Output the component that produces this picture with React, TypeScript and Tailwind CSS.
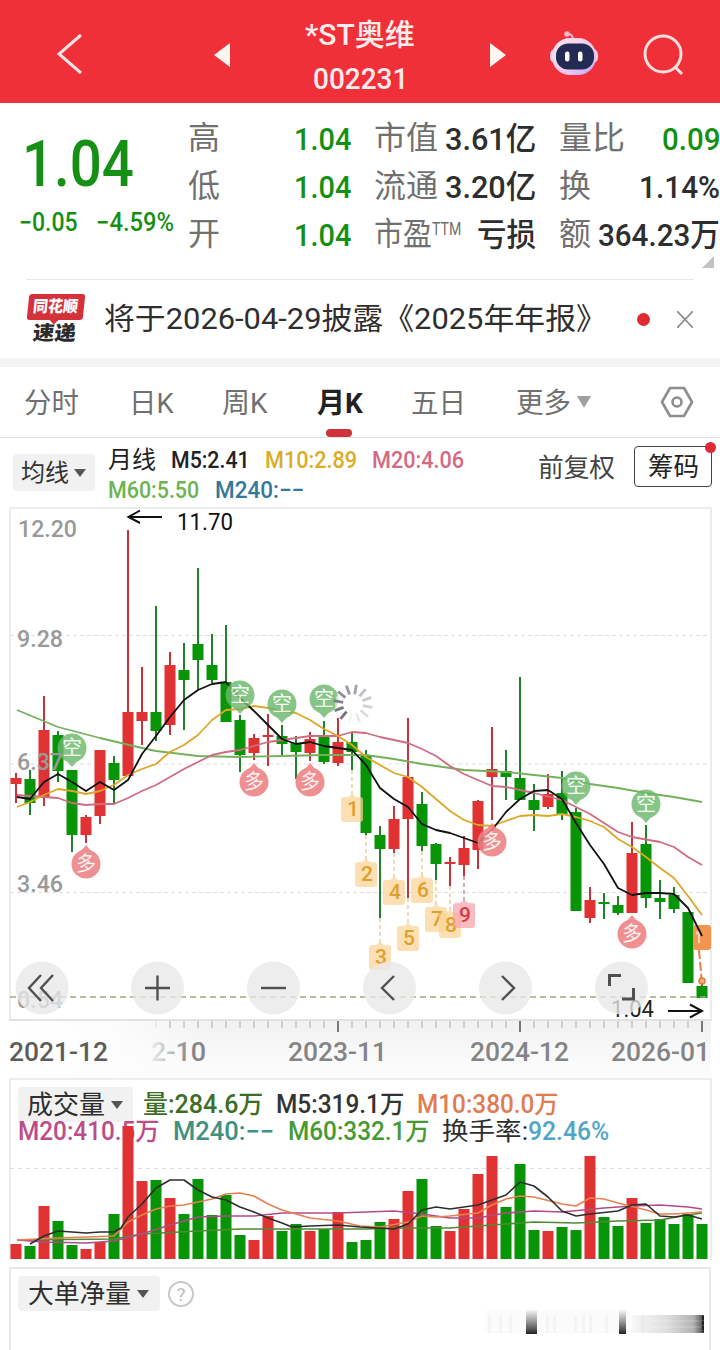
import { useLayoutEffect, useRef } from 'react';
import type { ReactNode } from 'react';

/* Condenses or widens a run of text so it fills exactly `w` pixels. */
function Fit({ w, className = '', children }: { w: number; className?: string; children: ReactNode }) {
  const ref = useRef<HTMLSpanElement>(null);
  useLayoutEffect(() => {
    const el = ref.current;
    if (el) el.style.transform = `scaleX(${w / el.offsetWidth})`;
  }, [w, children]);
  return (
    <span className={`block shrink-0 whitespace-nowrap ${className}`} style={{ width: w }}>
      <span ref={ref} className="inline-block origin-left whitespace-nowrap">{children}</span>
    </span>
  );
}

const RED = '#e03232';
const GREEN = '#079407';

// [bodyTop, bodyBottom, high, low, rising]
const candles: [number, number, number, number, number][] = [
  [778, 784, 773, 803, 1], [779, 803, 770, 815, 0], [730, 798, 696, 806, 1], [735, 771, 731, 782, 0],
  [770, 835, 770, 852, 0], [817, 835, 815, 843, 1], [750, 816, 750, 824, 1], [763, 780, 756, 804, 0],
  [712, 776, 530, 776, 1], [712, 721, 667, 745, 1], [712, 731, 606, 741, 0], [665, 725, 652, 735, 1],
  [670, 680, 643, 730, 0], [644, 660, 568, 690, 0], [665, 680, 634, 683, 0], [682, 722, 625, 722, 0],
  [720, 755, 715, 772, 0], [738, 753, 734, 760, 1], [735, 737, 714, 766, 1], [736, 744, 725, 755, 0],
  [743, 752, 736, 779, 0], [739, 753, 732, 761, 1], [736, 762, 721, 764, 0], [742, 763, 718, 766, 1],
  [742, 752, 733, 770, 0], [755, 833, 750, 835, 0], [835, 849, 826, 918, 0], [819, 849, 806, 853, 1],
  [777, 819, 718, 898, 1], [804, 846, 792, 851, 0], [844, 864, 843, 880, 0], [862, 864, 857, 886, 1],
  [848, 865, 836, 876, 1], [801, 850, 800, 869, 1], [769, 777, 727, 820, 1], [771, 777, 750, 800, 0],
  [778, 800, 677, 800, 0], [800, 810, 784, 831, 0], [794, 807, 774, 809, 1], [793, 815, 771, 820, 0],
  [812, 911, 808, 911, 0], [900, 918, 887, 923, 1], [902, 904, 893, 919, 0], [905, 913, 896, 915, 0],
  [853, 913, 822, 913, 1], [844, 898, 825, 908, 0], [898, 902, 880, 919, 0], [895, 909, 887, 913, 0],
  [912, 983, 912, 983, 0], [986, 998, 984, 998, 0],
];

// [top, rising]
const volumes: [number, number][] = [
  [1244, 1], [1246, 0], [1206, 1], [1221, 0], [1245, 0], [1249, 1], [1242, 1], [1214, 0], [1126, 1], [1181, 1],
  [1180, 0], [1198, 1], [1214, 0], [1179, 0], [1215, 0], [1195, 0], [1235, 0], [1240, 1], [1216, 1], [1231, 0],
  [1224, 0], [1231, 1], [1229, 0], [1212, 1], [1242, 0], [1240, 0], [1222, 0], [1219, 1], [1191, 1], [1179, 0],
  [1226, 0], [1231, 1], [1209, 1], [1174, 1], [1156, 1], [1207, 0], [1164, 0], [1230, 0], [1231, 1], [1227, 0],
  [1230, 0], [1156, 1], [1217, 0], [1226, 0], [1198, 1], [1223, 0], [1219, 0], [1224, 0], [1214, 0], [1224, 0],
];

const cx = (i: number) => 16 + 14 * i;

const averages: [string, string][] = [
  ['#74b05a', '17,710 58,727 100,738 142,748 156,751 198,756 240,757 282,756 324,755 366,755 394,759 422,764 464,770 506,772 534,775 562,778 590,784 618,788 646,793 674,797 702,802'],
  ['#cf6c80', '17,795 30,796 58,798 72,803 86,805 100,804 114,804 128,798 142,791 156,785 184,769 212,755 226,752 240,750 254,746 268,742 282,740 310,736 338,736 352,732 366,733 380,737 408,743 422,749 436,756 450,766 464,774 478,780 492,786 506,787 534,793 562,800 576,807 590,814 618,832 632,837 660,842 674,847 688,857 702,865'],
  ['#dca726', '17,807 30,802 44,795 58,789 72,791 86,794 100,791 114,785 128,775 142,769 156,764 170,752 184,745 198,735 212,720 226,710 240,709 254,706 268,708 282,711 296,713 310,720 324,729 338,736 352,745 366,757 380,765 394,773 408,777 422,787 436,799 450,811 464,820 478,825 492,826 506,821 520,816 534,815 548,816 562,814 576,817 590,821 604,827 618,839 632,847 646,857 660,868 674,878 688,896 702,915'],
  ['#111111', '17,797 30,799 44,782 58,774 72,782 86,791 100,782 114,790 128,780 142,754 156,736 170,717 184,700 198,690 212,684 226,682 240,698 254,711 268,725 282,739 296,744 310,742 324,746 338,748 352,750 366,765 380,788 394,799 408,807 422,824 436,830 450,833 464,838 478,843 492,830 506,812 520,799 534,791 548,790 562,799 576,823 590,845 604,864 618,888 632,895 646,893 660,893 674,894 688,908 702,936'],
];

const volumeAverages: [string, string][] = [
  ['#4f8a34', '17,1240 114,1239 142,1234 198,1231 240,1229 310,1229 366,1229 394,1228 450,1228 492,1225 534,1222 576,1223 618,1221 660,1220 688,1215 702,1213'],
  ['#b24a86', '17,1240 44,1242 86,1243 114,1241 142,1234 170,1225 198,1217 226,1216 254,1216 282,1213 338,1213 394,1211 422,1214 450,1218 478,1218 506,1213 534,1211 562,1212 604,1208 632,1206 660,1205 688,1207 702,1209'],
  ['#e5814f', '17,1240 58,1238 114,1236 128,1222 142,1215 156,1209 170,1206 184,1205 212,1199 226,1194 240,1193 254,1196 268,1204 282,1210 310,1218 338,1221 360,1226 380,1227 408,1222 422,1216 436,1217 450,1216 478,1213 492,1205 506,1199 520,1196 534,1197 562,1204 576,1206 590,1198 604,1199 618,1203 646,1210 660,1214 674,1214 702,1212'],
  ['#2e2e2e', '30,1244 44,1236 58,1231 72,1232 86,1233 100,1232 114,1232 121,1228 128,1217 142,1204 156,1188 170,1180 184,1180 198,1190 212,1197 226,1200 240,1207 254,1212 268,1218 282,1223 292,1227 310,1226 338,1225 360,1227 394,1229 408,1224 422,1210 436,1207 450,1209 478,1205 506,1195 520,1182 534,1186 548,1197 562,1211 576,1216 590,1214 618,1211 632,1205 646,1204 660,1216 674,1217 688,1215 702,1219'],
];

const shortMarks: [number, number][] = [[72, 748], [240, 695], [282, 704], [324, 699], [576, 786], [646, 804]];
const longMarks: [number, number][] = [[86, 864], [254, 782], [310, 782], [492, 842], [632, 934]];
// [x, center y, dashed line start]
const counts: [number, number, number][] = [
  [352, 808, 770], [366, 873, 835], [380, 956, 918], [394, 891, 853], [408, 937, 898],
  [422, 889, 851], [436, 918, 880], [450, 924, 886], [464, 914, 876],
];

function Label({ x, y, w, size = 24, fill = '#999', weight = 400, children }: { x: number; y: number; w: number; size?: number; fill?: string; weight?: number; children: string }) {
  return (
    <text x={x} y={y} fontSize={size} fill={fill} fontWeight={weight} textLength={w} lengthAdjust="spacingAndGlyphs">
      {children}
    </text>
  );
}

function PriceChart() {
  return (
    <svg className="block" width="720" height="571" viewBox="0 507 720 571">
      <defs>
        <linearGradient id="axis" x1="0" x2="0" y1="0" y2="1">
          <stop offset="0" stopColor="#f1f1f1" />
          <stop offset="0.7" stopColor="#fafafa" />
          <stop offset="1" stopColor="#fdfdfd" />
        </linearGradient>
        <linearGradient id="axisFade" x1="0" x2="1" y1="0" y2="0">
          <stop offset="0" stopColor="#fff" />
          <stop offset="0.5" stopColor="#fdfdfd" stopOpacity="0.95" />
          <stop offset="1" stopColor="#fbfbfb" stopOpacity="0" />
        </linearGradient>
        <linearGradient id="dateFade" gradientUnits="userSpaceOnUse" x1="150" x2="190" y1="0" y2="0">
          <stop offset="0" stopColor="#eee" />
          <stop offset="0.35" stopColor="#ccc" />
          <stop offset="1" stopColor="#858585" />
        </linearGradient>
      </defs>
      <rect x="10" y="1020" width="701" height="58" fill="url(#axis)" />
      <rect x="10" y="1020" width="200" height="58" fill="url(#axisFade)" />
      <path d="M10 1020V508H711V1020" fill="none" stroke="#e8e8e8" strokeWidth="1.6" />
      <path d="M9 1020H712" stroke="#e2e2e2" strokeWidth="2" />
      {[635.5, 764, 892.5].map((y) => (
        <path key={y} d={`M10 ${y}H710`} stroke="#e5dcdf" strokeDasharray="4 3" />
      ))}
      {candles.map(([top, bottom, high, low, up], i) => (
        <g key={i}>
          <rect x={cx(i) - 1} y={high} width="2" height={low - high} fill={up ? '#c8323a' : '#21802a'} />
          <rect x={cx(i) - 5.5} y={top} width="11" height={bottom - top} fill={up ? RED : GREEN} />
        </g>
      ))}
      {counts.map(([x, y, from], i) => (
        <g key={x}>
          <path d={`M${x} ${from}V${y - 13}`} stroke={i === 8 ? '#b0777c' : '#dfc18a'} strokeWidth="1.2" strokeDasharray="4 3" />
          <path
            d={`M${x - 8} ${y - 11}H${x - 4}L${x} ${y - 14}L${x + 4} ${y - 11}H${x + 8}Q${x + 11} ${y - 11} ${x + 11} ${y - 8}V${y + 11}Q${x + 11} ${y + 14} ${x + 8} ${y + 14}H${x - 8}Q${x - 11} ${y + 14} ${x - 11} ${y + 11}V${y - 8}Q${x - 11} ${y - 11} ${x - 8} ${y - 11}Z`}
            fill={i === 8 ? '#f7a0a8' : '#fbd394'}
            fillOpacity="0.7"
          />
          <text x={x + 1} y={y + 8} fontSize="21" fontWeight="500" textAnchor="middle" fill={i === 8 ? '#d13c44' : '#dfa02b'}>{i + 1}</text>
        </g>
      ))}
      <g>
        <rect x="693" y="925" width="18" height="25" rx="3" fill="#f19550" />
        <path d="M699 930V943M699 931L696 934" stroke="#fbd9b5" strokeWidth="2" fill="none" />
        <path d="M699 950L701.5 978" stroke="#d9834a" strokeWidth="2" strokeDasharray="9 3" />
        <circle cx="702" cy="981" r="3" fill="#f7b27a" stroke="#e2793b" strokeWidth="1.5" />
      </g>
      {averages.map(([color, points]) => (
        <polyline key={color} points={points} fill="none" stroke={color} strokeWidth="1.8" strokeLinejoin="round" />
      ))}
      {shortMarks.map(([x, y]) => (
        <g key={x} opacity="0.82">
          <path d={`M${x - 6} ${y + 12}L${x} ${y + 19}L${x + 6} ${y + 12}Z`} fill="#6cb86e" />
          <circle cx={x} cy={y} r="14.5" fill="#6cb86e" />
          <text x={x} y={y + 7} fontSize="20" textAnchor="middle" fill="#f1fff1">空</text>
        </g>
      ))}
      {longMarks.map(([x, y]) => (
        <g key={x} opacity="0.88">
          <path d={`M${x - 6} ${y - 12}L${x} ${y - 19}L${x + 6} ${y - 12}Z`} fill="#ec8084" />
          <circle cx={x} cy={y} r="14.5" fill="#ec8084" />
          <text x={x} y={y + 7} fontSize="20" textAnchor="middle" fill="#fff0f0">多</text>
        </g>
      ))}
      <circle cx="353" cy="704" r="18" fill="#fff" fillOpacity="0.6" />
      {Array.from({ length: 12 }, (_, k) => (
        <path
          key={k}
          d="M353 694V684.500"
          stroke="#77707c"
          strokeWidth="2.8"
          strokeOpacity={[0.65, 0.45, 0.38, 0.32, 0.25, 0.15, 0.08, 1, 0.95, 0.88, 0.8, 0.72][k]}
          transform={`rotate(${k * 30 + 10} 353 704)`}
        />
      ))}
      <path d="M10 997H710" stroke="#a5a580" strokeWidth="1.5" strokeDasharray="6 4" />
      <g fontWeight="500">
        <Label x={18} y={537} w={59} weight={500}>12.20</Label>
        <Label x={17} y={647} w={46} weight={500}>9.28</Label>
        <Label x={17} y={770} w={46} weight={500}>6.37</Label>
        <Label x={17} y={892} w={46} weight={500}>3.46</Label>
        <Label x={17} y={1008} w={46} weight={500}>0.54</Label>
      </g>
      <path d="M162 517H129M140 510.500L128.500 517L140 523" fill="none" stroke="#111" strokeWidth="2" />
      <Label x={177} y={530} w={56} size={23} fill="#111">11.70</Label>
      <Label x={611} y={1017} w={43} size={23} fill="#222">1.04</Label>
      {[42, 157.5, 273.5, 389.5, 505.5, 621.5].map((x) => (
        <circle key={x} cx={x} cy="988" r="26.500" fill="#e8e8e8" fillOpacity="0.78" />
      ))}
      <g fill="none" stroke="#505050" strokeWidth="2.4">
        <path d="M41 975L29 988L41 1001M53 975L41 988L53 1001" />
        <path d="M145 988H170M157.500 975.500V1000.500" />
        <path d="M261 988H286" />
        <path d="M394 976L382 988L394 1000" />
        <path d="M502 976L514 988L502 1000" />
        <path d="M609.500 986V975.500H621M633.500 988V999H622" strokeWidth="3" />
      </g>
      <path d="M668 1011H701M690 1004.500L702 1011L690 1017.500" fill="none" stroke="#111" strokeWidth="2" />
      {Array.from({ length: 40 }, (_, k) => k + 10).map((i) => {
        const major = i === 23 || i === 36 || i === 49;
        return <path key={i} d={`M${cx(i)} 1021V${major ? 1032 : 1028}`} stroke={i === 10 ? '#ddd' : major ? '#777' : '#aaa'} strokeWidth={major ? 2 : 1} />;
      })}
      <Label x={9} y={1061} w={99} size={26} weight={500} fill="#5c5c5c">2021-12</Label>
      <Label x={151} y={1061} w={55} size={26} weight={500} fill="url(#dateFade)">2-10</Label>
      <Label x={288} y={1061} w={99} size={26} weight={500} fill="#848484">2023-11</Label>
      <Label x={470} y={1061} w={99} size={26} weight={500} fill="#848484">2024-12</Label>
      <Label x={611} y={1061} w={99} size={26} weight={500} fill="#848484">2026-01</Label>
    </svg>
  );
}

function VolumeChart() {
  return (
    <svg className="absolute inset-0" width="720" height="189" viewBox="0 1078 720 189">
      <path d="M10 1260V1079H711V1260" fill="none" stroke="#e8e8e8" strokeWidth="1.6" />
      <path d="M10 1168.500H710" stroke="#dcdcdc" strokeDasharray="4 4" />
      {volumes.map(([top, up], i) => (
        <rect key={i} x={cx(i) - 5.5} y={top} width="11" height={1259 - top} fill={up ? RED : GREEN} />
      ))}
      {volumeAverages.map(([color, points]) => (
        <polyline key={color} points={points} fill="none" stroke={color} strokeWidth="1.6" strokeLinejoin="round" />
      ))}
    </svg>
  );
}

function Caret({ className = 'border-t-[#555]' }: { className?: string }) {
  return <span className={`block h-0 w-0 border-x-[6px] border-t-[8px] border-x-transparent ${className}`} />;
}

function Header() {
  return (
    <header className="flex h-[103px] bg-[#f03038] text-[#ffecec]">
      <div className="flex w-[190px] items-center pl-[57px] pt-1">
        <svg width="26" height="42" viewBox="0 0 26 42" fill="none" stroke="#ffe3e3" strokeWidth="3"><path d="M24 2L2 21L24 40" /></svg>
      </div>
      <div className="flex w-[340px] items-center justify-between px-[24px]">
        <svg className="mt-[7px]" width="17" height="24" viewBox="0 0 17 24"><path d="M16 0V24L0 12Z" fill="#fff6f2" /></svg>
        <div className="flex flex-col items-center pt-[11px]">
          <Fit w={110} className="h-[44px] text-[30px] font-medium leading-[42px]">*ST奥维</Fit>
          <Fit w={95} className="h-[42px] text-[30px] font-medium leading-[42px]">002231</Fit>
        </div>
        <svg className="mt-[7px]" width="17" height="24" viewBox="0 0 17 24"><path d="M1 0V24L17 12Z" fill="#fff6f2" /></svg>
      </div>
      <svg className="ml-[18px] mt-[28px]" width="52" height="50" viewBox="548 28 52 50">
        <defs>
          <linearGradient id="shell" x1="0" x2="1" y1="0" y2="1">
            <stop offset="0" stopColor="#ffe6ef" />
            <stop offset="0.6" stopColor="#f3c9ee" />
            <stop offset="1" stopColor="#b7a5f5" />
          </linearGradient>
        </defs>
        <circle cx="567" cy="34" r="2.800" fill="#f9b8c6" />
        <path d="M568 34Q573 34 573 40" fill="none" stroke="#f9b8c6" strokeWidth="2" />
        <rect x="550" y="48" width="48" height="16" rx="7" fill="#f9d6ee" />
        <rect x="552" y="38" width="44" height="37" rx="18" fill="url(#shell)" />
        <rect x="556" y="43.500" width="38" height="26" rx="12" fill="#232b55" />
        <rect x="565" y="51.500" width="4.500" height="10" rx="2.200" fill="#fff" />
        <rect x="578" y="51.500" width="4.500" height="10" rx="2.200" fill="#fff" />
      </svg>
      <svg className="ml-[42px] mt-[34px]" width="44" height="42" viewBox="642 34 44 42" fill="none" stroke="#ffe0dd" strokeWidth="3">
        <circle cx="663" cy="54" r="18" />
        <path d="M675 67L682 74" />
      </svg>
    </header>
  );
}

function Row({ label, children }: { label: ReactNode; children: ReactNode }) {
  return (
    <div className="flex h-[48px] items-center justify-between text-[32px] leading-[48px]">
      <span className="flex text-[#707070]">{label}</span>
      <span className="pt-[2px] font-medium text-[#2e2e2e]">{children}</span>
    </div>
  );
}

const green = 'text-[#159015]';

function Quote() {
  return (
    <section className="relative mx-0 flex h-[176px] pt-[11px]">
      <div className="w-[188px] pl-[19px]">
        <Fit w={112} className="ml-[3px] mt-[13px] h-[76px] text-[64px] font-medium leading-[76px] text-[#159015]">1.04</Fit>
        <div className="mt-[2px] flex text-[25px] font-medium leading-[36px] text-[#159015]">
          <Fit w={59}>−0.05</Fit>
          <Fit w={78} className="ml-[18px]">−4.59%</Fit>
        </div>
      </div>
      <div className="w-[163px]">
        <Row label="高"><Fit w={57} className={green}>1.04</Fit></Row>
        <Row label="低"><Fit w={57} className={green}>1.04</Fit></Row>
        <Row label="开"><Fit w={57} className={green}>1.04</Fit></Row>
      </div>
      <div className="ml-[23px] w-[162px]">
        <Row label="市值"><Fit w={91}>3.61亿</Fit></Row>
        <Row label="流通"><Fit w={91}>3.20亿</Fit></Row>
        <Row label={<><Fit w={58}>市盈</Fit><Fit w={29} className="text-[19px] leading-[38px]">TTM</Fit></>}><Fit w={59}>亏损</Fit></Row>
      </div>
      <div className="ml-[23px] w-[161px]">
        <Row label={<Fit w={66}>量比</Fit>}><Fit w={58} className={green}>0.09</Fit></Row>
        <Row label="换"><Fit w={81}>1.14%</Fit></Row>
        <Row label={<Fit w={32}>额</Fit>}><Fit w={122}>364.23万</Fit></Row>
      </div>
      <svg className="absolute bottom-[11px] right-[6px]" width="12" height="12"><path d="M12 0V12H0Z" fill="#c2c2c2" /></svg>
    </section>
  );
}

function News() {
  return (
    <section className="mx-[26px] flex h-[79px] items-center border-t border-[#e6e6e6]">
      <div className="mt-[1px] flex w-[60px] flex-col items-center">
        <div className="relative h-[26px] w-[56px] -skew-x-6 rounded-[3px] bg-[#d4323a]">
          <Fit w={45} className="ml-[5px] text-[16px] font-black leading-[25px] text-white">同花顺</Fit>
          <span className="absolute -bottom-[3px] left-[24px] h-[7px] w-[7px] rotate-45 bg-[#d4323a]" />
        </div>
        <Fit w={43} className="mr-[4px] -skew-x-6 text-[20px] font-black leading-[26px] text-[#2b2b2b]">速递</Fit>
      </div>
      <Fit w={503} className="ml-[18px] text-[30px] leading-[44px] text-[#2e2e2e]">将于2026-04-29披露《2025年年报》</Fit>
      <span className="ml-[30px] h-[13px] w-[13px] rounded-full bg-[#df2a31]" />
      <svg className="ml-[27px]" width="16" height="17" viewBox="0 0 16 17" stroke="#8a8a8a" strokeWidth="1.6"><path d="M0 0L16 17M16 0L0 17" /></svg>
    </section>
  );
}

function Tabs() {
  return (
    <nav className="flex h-[71px] items-center border-b border-[#e2e2e2] pl-[24px] text-[28px] leading-[40px] text-[#707070]">
      <Fit w={55} className="mt-[3px]">分时</Fit>
      <Fit w={45} className="ml-[50px] mt-[3px]">日K</Fit>
      <Fit w={46} className="ml-[48px] mt-[3px]">周K</Fit>
      <div className="relative ml-[49px] mt-[3px]">
        <Fit w={46} className="font-bold text-[#222]">月K</Fit>
        <span className="absolute -bottom-[13px] left-[9px] h-[8px] w-[26px] rounded-full bg-[#cf3339]" />
      </div>
      <Fit w={55} className="ml-[48px] mt-[3px]">五日</Fit>
      <Fit w={55} className="ml-[50px] mt-[3px]">更多</Fit>
      <span className="ml-[6px]"><Caret className="!border-x-[7px] !border-t-[12px] border-t-[#a0a0a0]" /></span>
      <svg className="ml-[69px]" width="34" height="32" viewBox="0 0 34 32" fill="none" stroke="#8d8d8d" strokeWidth="2.600">
        <path d="M10 2H24L32 16L24 30H10L2 16Z" strokeLinejoin="round" />
        <circle cx="17" cy="16" r="4.500" />
      </svg>
    </nav>
  );
}

function AverageLegend() {
  return (
    <section className="flex h-[69px] pl-[13px]">
      <div className="mt-[16px] flex h-[37px] w-[82px] items-center gap-[5px] rounded bg-[#f1f1f1] pl-[8px] text-[24px] text-[#333]">
        <Fit w={48}>均线</Fit><Caret />
      </div>
      <div className="ml-[13px] w-[430px] pt-[7px] text-[24px] leading-[31px]">
        <div className="flex h-[30px] font-medium">
          <Fit w={48} className="font-normal text-[#222]">月线</Fit>
          <Fit w={79} className="ml-[15px] text-[#222]">M5:2.41</Fit>
          <Fit w={92} className="ml-[15px] text-[#d9ac26]">M10:2.89</Fit>
          <Fit w={92} className="ml-[15px] text-[#d46a82]">M20:4.06</Fit>
        </div>
        <div className="flex font-medium">
          <Fit w={91} className="text-[#6cb552]">M60:5.50</Fit>
          <Fit w={89} className="ml-[16px] text-[#34789a]">M240:−−</Fit>
        </div>
      </div>
      <Fit w={77} className="mt-[12px] text-[26px] leading-[36px] text-[#444]">前复权</Fit>
      <div className="relative ml-[19px] mt-[8px] flex h-[41px] w-[78px] items-center rounded-[4px] border border-[#444] pl-[13px] text-[26px] leading-[38px] text-[#222]">
        <Fit w={51}>筹码</Fit>
        <span className="absolute -right-[5px] -top-[5px] h-[11px] w-[11px] rounded-full bg-[#df2a38]" />
      </div>
    </section>
  );
}

function Volume() {
  return (
    <section className="relative h-[189px] pl-[18px] pt-[9px]">
      <div className="flex h-[35px] items-center text-[25px] font-medium leading-[34px]">
        <div className="flex h-[35px] w-[115px] items-center gap-[6px] rounded bg-[#f1f1f1] pl-[9px] font-normal text-[#2e2e2e]">
          <Fit w={78} className="text-[26px]">成交量</Fit><Caret />
        </div>
        <Fit w={120} className="ml-[10px] text-[#3c6e24]">量:284.6万</Fit>
        <Fit w={128} className="ml-[13px] text-[#333]">M5:319.1万</Fit>
        <Fit w={142} className="ml-[13px] text-[#e07c50]">M10:380.0万</Fit>
      </div>
      <div className="-mt-[7px] flex text-[25px] font-medium leading-[34px]">
        <Fit w={142} className="text-[#bd4d88]">M20:410.5万</Fit>
        <Fit w={101} className="ml-[13px] text-[#3f9183]">M240:−−</Fit>
        <Fit w={142} className="ml-[14px] text-[#469a35]">M60:332.1万</Fit>
        <Fit w={86} className="ml-[12px] font-normal text-[#2e2e2e]">换手率:</Fit>
        <Fit w={81} className="text-[#51a5c8]">92.46%</Fit>
      </div>
      <VolumeChart />
    </section>
  );
}

function NetOrders() {
  return (
    <section className="mx-[9px] flex h-[83px] border-x-2 border-t-2 border-[#e8e8e8] pl-[7px] pt-[7px]">
      <div className="flex h-[35px] w-[142px] items-center gap-[6px] rounded bg-[#f1f1f1] pl-[10px] text-[26px] leading-[34px] text-[#2e2e2e]">
        <Fit w={103} className="pt-[1px]">大单净量</Fit><Caret />
      </div>
      <span className="ml-[8px] mt-[5px] flex h-[26px] w-[26px] items-center justify-center rounded-full border-2 border-[#c8c8c8] text-[19px] leading-none text-[#bdbdbd]">?</span>
      <svg className="ml-[287px] mt-[31px]" width="226" height="32" viewBox="480 1308 226 32">
        <defs>
          <linearGradient id="bar" x1="0" x2="0" y1="0" y2="1">
            <stop offset="0" stopColor="#666" stopOpacity="0" />
            <stop offset="0.5" stopColor="#555" stopOpacity="0.6" />
            <stop offset="1" stopColor="#222" />
          </linearGradient>
          <linearGradient id="trail" x1="0" x2="1" y1="0" y2="0">
            <stop offset="0" stopColor="#888" stopOpacity="0.06" />
            <stop offset="0.5" stopColor="#777" stopOpacity="0.25" />
            <stop offset="0.85" stopColor="#666" stopOpacity="0.5" />
            <stop offset="1" stopColor="#222" stopOpacity="0.85" />
          </linearGradient>
        </defs>
        <rect x="484" y="1312" width="145" height="22" fill="#777" fillOpacity="0.03" />
        {[487, 498, 508, 545, 552, 573, 581, 588, 604, 640].map((x) => (
          <rect key={x} x={x} y="1316" width="3" height="18" fill="#777" fillOpacity="0.05" />
        ))}
        <rect x="525" y="1310" width="11" height="25" fill="url(#bar)" />
        <rect x="618" y="1310" width="7" height="25" fill="url(#bar)" />
        <rect x="630" y="1316" width="73" height="18" fill="url(#trail)" />
        <path d="M650 1322H700M650 1328H700" stroke="#fff" strokeOpacity="0.25" />
        <path d="M702 1317V1333" stroke="#222" strokeWidth="2" strokeDasharray="4 1" />
      </svg>
    </section>
  );
}

export default function App() {
  return (
    <main className="h-[1350px] w-[720px] overflow-hidden bg-white font-['Roboto','Noto_Sans_CJK_SC',sans-serif]">
      <Header />
      <Quote />
      <News />
      <div className="h-[9px] bg-[#f4f4f4]" />
      <Tabs />
      <AverageLegend />
      <PriceChart />
      <Volume />
      <NetOrders />
    </main>
  );
}
